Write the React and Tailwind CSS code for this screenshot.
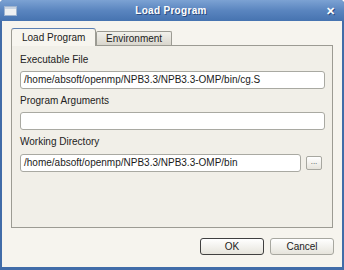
import React from 'react'

const font = { fontFamily: '"Liberation Sans", Arial, sans-serif' }

const Field = ({ label, value, className = '' }) => (
  <div className={`flex flex-col ${className}`}>
    <span className="text-[10px] leading-[12px] text-[#222]">{label}</span>
    <div className="mt-[5px] h-[18px] rounded-[3px] border border-[#a9a9a2] bg-white pl-[3px] flex items-center text-[10px] leading-[12px] text-[#1a1a1a] whitespace-nowrap overflow-hidden">
      {value}
    </div>
  </div>
)

const Button = ({ label, primary }) => (
  <button
    className={`w-[64px] h-[17px] rounded-[3px] border text-[10px] leading-[12px] text-[#222] bg-gradient-to-b from-white to-[#e6e4dc] ${
      primary ? 'border-[#404040]' : 'border-[#a7a7a0]'
    }`}
  >
    {label}
  </button>
)

export default function App() {
  return (
    <div className="w-[344px] h-[270px] flex flex-col bg-[#416ca8] rounded-t-[4px] overflow-hidden" style={font}>
      {/* title bar */}
      <div className="h-[21px] shrink-0 flex items-center px-[5px] bg-gradient-to-b from-[#7ca2d3] via-[#5a85bf] to-[#4673b0] relative">
        <div className="w-[11px] h-[8px] bg-[#eef0f2] border-t-[2px] border-[#c9d4e2] shadow-[0_0_0_1px_#9fb4d0]" />
        <span className="flex-1 text-center text-white font-bold text-[10px] leading-[12px] [text-shadow:1px_1px_0_#2c4c80] tracking-[0.3px]">
          Load Program
        </span>
        <span className="text-white font-bold text-[11px] leading-[12px] mr-[4px] [text-shadow:1px_1px_0_#2c4c80]">✕</span>
      </div>

      {/* body */}
      <div className="flex-1 flex flex-col mx-[2px] mb-[3px] bg-[#f6f4ee] pl-[9px] pr-[8px] pt-[7px]">
        {/* tabs */}
        <div className="flex items-end h-[17px] mr-[1px]">
          <div className="w-[85px] h-[18px] -mb-[1px] z-10 rounded-t-[3px] border border-b-0 border-[#9c9b93] border-t-[#5b80b3] bg-[#f7f5ef] flex items-start pt-[3px] pl-[10px] text-[10px] leading-[12px] text-[#222]">
            Load Program
          </div>
          <div className="w-[76px] h-[14px] rounded-t-[2px] border border-b-0 border-[#9c9b93] bg-gradient-to-b from-[#f2f1ec] to-[#d9d6cd] flex items-center pl-[9px] text-[10px] leading-[12px] text-[#222]">
            Environment
          </div>
        </div>

        {/* panel */}
        <div className="h-[183px] mr-[1px] border border-[#9c9b93] bg-[#f1efe8] pt-[8px] pl-[8px] pr-[7px]">
          <Field label="Executable File" value="/home/absoft/openmp/NPB3.3/NPB3.3-OMP/bin/cg.S" />
          <Field label="Program Arguments" value="" className="mt-[6px]" />
          <div className="flex flex-col mt-[6px]">
            <span className="text-[10px] leading-[12px] text-[#222]">Working Directory</span>
            <div className="mt-[6px] flex items-center gap-[5px]">
              <div className="w-[281px] h-[18px] rounded-[3px] border border-[#a9a9a2] bg-white pl-[3px] flex items-center text-[10px] leading-[12px] text-[#1a1a1a] whitespace-nowrap overflow-hidden">
                /home/absoft/openmp/NPB3.3/NPB3.3-OMP/bin
              </div>
              <div className="w-[16px] h-[14px] rounded-[2px] border border-[#a7a7a0] bg-gradient-to-b from-white to-[#e6e4dc] flex items-center justify-center text-[8px] leading-[8px] text-[#444] pb-[3px]">
                ...
              </div>
            </div>
          </div>
        </div>

        {/* buttons */}
        <div className="flex justify-end gap-[6px] mt-[10px]">
          <Button label="OK" primary />
          <Button label="Cancel" />
        </div>
      </div>
    </div>
  )
}
